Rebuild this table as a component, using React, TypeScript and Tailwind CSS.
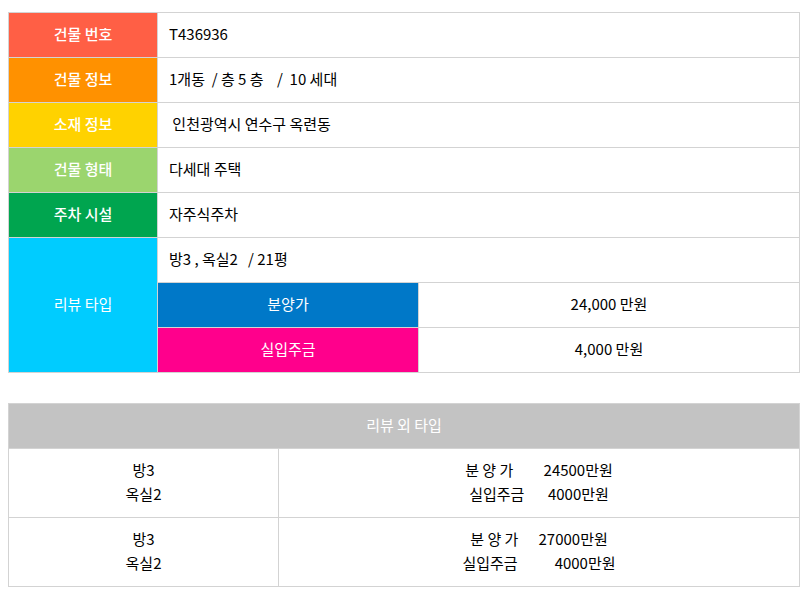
import React from 'react';

const font = { fontFamily: '"Noto Sans CJK KR", "Noto Sans", sans-serif' };

const rows = [
  { label: '건물 번호', color: 'bg-[#ff5f45]', value: 'T436936' },
  { label: '건물 정보', color: 'bg-[#ff9100]', value: '1개동  / 층 5 층    /  10 세대' },
  { label: '소재 정보', color: 'bg-[#ffd200]', value: ' 인천광역시 연수구 옥련동' },
  { label: '건물 형태', color: 'bg-[#9bd56e]', value: '다세대 주택' },
  { label: '주차 시설', color: 'bg-[#00a54f]', value: '자주식주차' },
];

const others = [
  { room: ['방3', '옥실2'], price: ['분 양 가         24500만원', '실입주금       4000만원'] },
  { room: ['방3', '옥실2'], price: ['분 양 가      27000만원', '실입주금           4000만원'] },
];

const cell = 'border border-[#d3d3d3] pb-[2px]';

export default function App() {
  return (
    <div className="bg-white w-[810px] h-[599px] pt-3 px-2 text-[15px] text-black leading-[20px]" style={font}>
      <table className="w-[792px] border-collapse table-fixed">
        <colgroup>
          <col className="w-[149px]" />
          <col className="w-[261px]" />
          <col />
        </colgroup>
        <tbody>
          {rows.map((r) => (
            <tr key={r.label} className="h-[45px]">
              <td className={`${r.color} ${cell} text-white text-center font-medium`}>{r.label}</td>
              <td colSpan={2} className={`${cell} pl-[11px] whitespace-pre`}>{r.value}</td>
            </tr>
          ))}
          <tr className="h-[45px]">
            <td rowSpan={3} className={`bg-[#00ccff] ${cell} text-white text-center`}>리뷰 타입</td>
            <td colSpan={2} className={`${cell} pl-[11px] whitespace-pre`}>방3 , 옥실2   / 21평</td>
          </tr>
          <tr className="h-[45px]">
            <td className={`bg-[#0078c8] ${cell} text-white text-center`}>분양가</td>
            <td className={`${cell} text-center`}>24,000 만원</td>
          </tr>
          <tr className="h-[45px]">
            <td className={`bg-[#ff008c] ${cell} text-white text-center`}>실입주금</td>
            <td className={`${cell} text-center`}>4,000 만원</td>
          </tr>
        </tbody>
      </table>

      <table className="w-[792px] border-collapse table-fixed mt-[30px]">
        <colgroup>
          <col className="w-[270px]" />
          <col />
        </colgroup>
        <tbody>
          <tr className="h-[45px]">
            <td colSpan={2} className={`bg-[#c3c3c3] ${cell} text-white text-center`}>리뷰 외 타입</td>
          </tr>
          {others.map((o, i) => (
            <tr key={i} className="h-[69px]">
              <td className={`${cell} text-center leading-[24px]`}>
                {o.room.map((t) => (
                  <div key={t}>{t}</div>
                ))}
              </td>
              <td className={`${cell} text-center leading-[24px]`}>
                {o.price.map((t) => (
                  <div key={t} className="whitespace-pre">{t}</div>
                ))}
              </td>
            </tr>
          ))}
        </tbody>
      </table>
    </div>
  );
}
